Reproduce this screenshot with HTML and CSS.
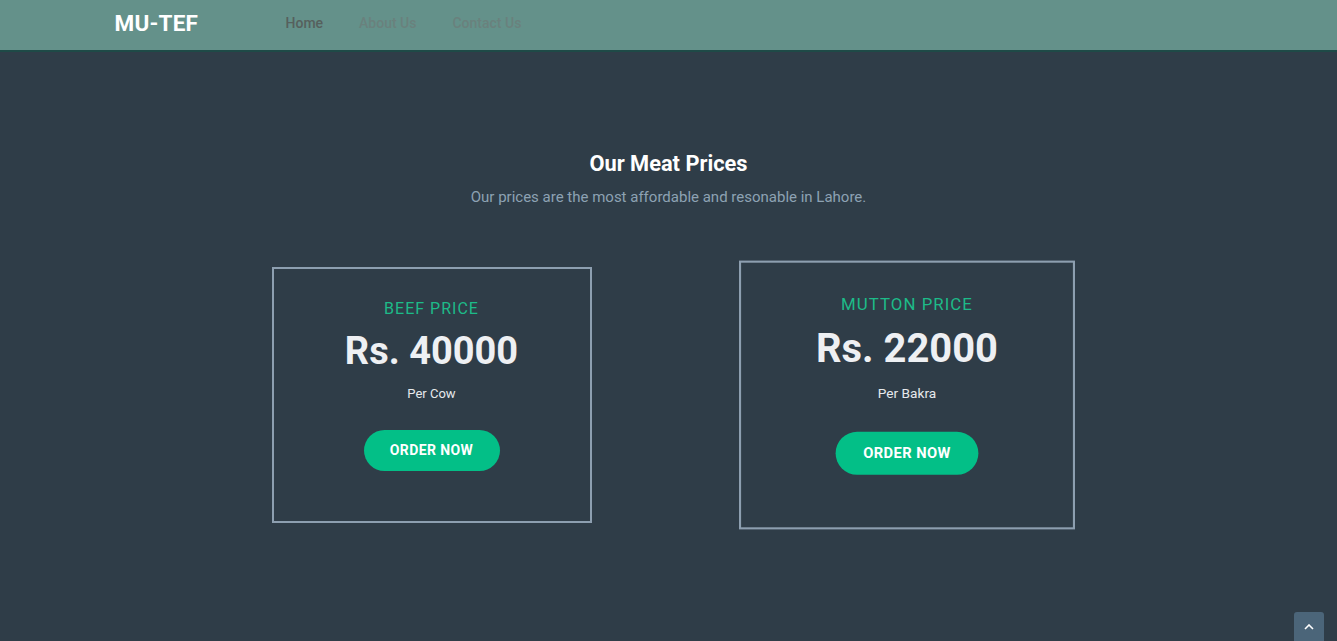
FILE: index.html
```html
<!DOCTYPE html>
<html lang="en">
<head>
<meta charset="utf-8">
<title>MU-TEF</title>
<link rel="stylesheet" href="styles.css">
</head>
<body>
<header class="navbar">
  <div class="container nav-inner">
    <a class="brand" href="#">MU-TEF</a>
    <nav class="nav-links">
      <a class="nav-link active" href="#">Home</a>
      <a class="nav-link" href="#">About Us</a>
      <a class="nav-link" href="#">Contact Us</a>
    </nav>
  </div>
</header>
<main class="pricing">
  <div class="section-head">
    <h2 class="section-title">Our Meat Prices</h2>
    <p class="section-sub">Our prices are the most affordable and resonable in Lahore.</p>
  </div>
  <div class="cards">
    <div class="col">
      <div class="card">
        <div class="card-label">BEEF PRICE</div>
        <div class="card-price">Rs. 40000</div>
        <div class="card-unit">Per Cow</div>
        <a class="btn" href="#">ORDER NOW</a>
      </div>
    </div>
    <div class="col">
      <div class="card card-hover">
        <div class="card-label">MUTTON PRICE</div>
        <div class="card-price">Rs. 22000</div>
        <div class="card-unit">Per Bakra</div>
        <a class="btn" href="#">ORDER NOW</a>
      </div>
    </div>
  </div>
</main>
<a class="to-top" href="#">
  <svg width="10" height="6" viewBox="0 0 10 6"><path d="M1 5 L5 1 L9 5" fill="none" stroke="#ffffff" stroke-width="1.6"/></svg>
</a>
</body>
</html>
```
FILE: styles.css
```css
* { box-sizing: border-box; }
html, body { margin: 0; padding: 0; }
body {
  background: #2f3d48;
  font-family: Roboto, "Liberation Sans", Arial, sans-serif;
  color: #ffffff;
  height: 641px;
  overflow: hidden;
}
a { text-decoration: none; }
.container {
  width: 1140px;
  margin: 0 auto;
  padding: 0 15px;
}
.navbar {
  background: #64918a;
  height: 52px;
  border-bottom: 2px solid #1e4a47;
}
.nav-inner {
  display: flex;
  align-items: center;
  height: 50px;
  padding-bottom: 4px;
}
.brand {
  color: #ffffff;
  font-weight: 700;
  font-size: 22.5px;
  letter-spacing: 0.2px;
  margin-left: 1px;
  width: 153px;
}
.nav-links { display: flex; }
.nav-link {
  font-size: 14px;
  font-weight: 500;
  color: #6a817d;
  padding: 0 18px;
  line-height: 20px;
}
.nav-link.active { color: #56605d; }
.pricing { padding-top: 98px; }
.section-head { text-align: center; }
.section-title {
  margin: 0;
  font-size: 21.8px;
  font-weight: 700;
  line-height: 28px;
}
.section-sub {
  margin: 8px 0 0;
  font-size: 15px;
  color: #8da2b3;
  line-height: 22px;
}
.cards {
  display: flex;
  justify-content: center;
  margin-top: 59px;
  padding-left: 1px;
}
.col {
  width: 475px;
  display: flex;
  justify-content: center;
}
.card {
  width: 320px;
  height: 256px;
  border: 2px solid #8d9fb0;
  display: flex;
  flex-direction: column;
  align-items: center;
  padding-top: 30px;
}
.card-hover { transform: scale(1.05); }
.card-label {
  color: #1dbb88;
  font-size: 16px;
  letter-spacing: 1px;
  line-height: 20px;
}
.card-price {
  color: #eef0f3;
  font-size: 38px;
  font-weight: 700;
  line-height: 46px;
  margin-top: 9px;
}
.card-unit {
  color: #e6e9ec;
  font-size: 13px;
  line-height: 18px;
  margin-top: 11px;
}
.btn {
  margin-top: 27px;
  background: #03bf87;
  color: #ffffff;
  font-size: 14px;
  font-weight: 700;
  letter-spacing: 0.4px;
  height: 41px;
  line-height: 41px;
  width: 136px;
  text-align: center;
  border-radius: 21px;
}
.to-top {
  position: fixed;
  right: 13px;
  bottom: -4px;
  width: 30px;
  height: 33px;
  background: #4b6579;
  border-radius: 3px;
  display: flex;
  align-items: center;
  justify-content: center;
  padding-bottom: 4px;
}
```
